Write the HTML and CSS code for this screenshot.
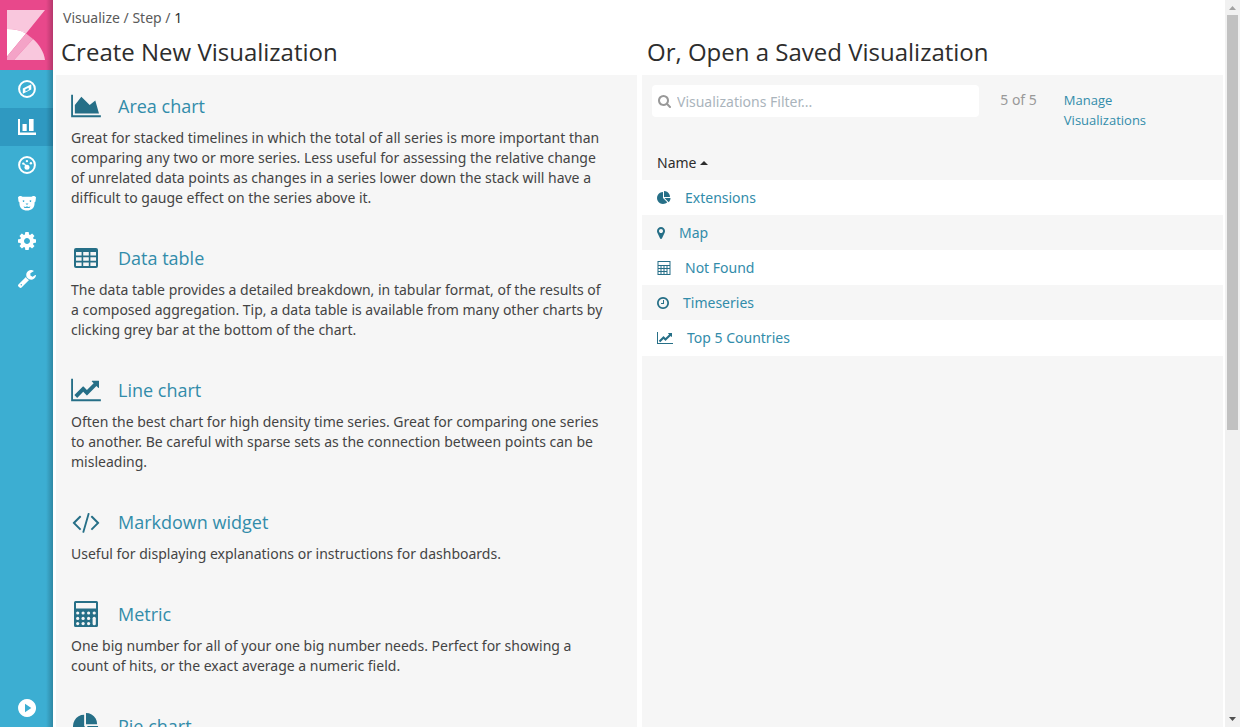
FILE: index.html
```html
<!DOCTYPE html>
<html lang="en">
<head>
<meta charset="utf-8">
<title>Visualize - Kibana</title>
<link rel="stylesheet" href="styles.css">
</head>
<body>
<svg class="sprite" aria-hidden="true">
  <symbol id="area" viewBox="0 0 2048 1792"><path d="M2048 1536v128h-2048v-1536h128v1408h1920zm-384-1024l256 896h-1664v-576l448-576 576 576z"/></symbol>
  <symbol id="line" viewBox="0 0 2048 1792"><path d="M2048 1536v128h-2048v-1536h128v1408h1920zm-128-1248v435q0 21-19.5 29.5t-35.5-7.5l-121-121-633 633q-10 10-23 10t-23-10l-233-233-416 416-192-192 585-585q10-10 23-10t23 10l233 233 464-464-121-121q-16-16-7.5-35.5t29.5-19.5h435q14 0 23 9t9 23z"/></symbol>
  <symbol id="table" viewBox="0 0 24 20"><path fill-rule="evenodd" d="M2 0h20a2 2 0 0 1 2 2v16a2 2 0 0 1-2 2H2a2 2 0 0 1-2-2V2a2 2 0 0 1 2-2zM2 4v3.600h5.600V4zM9.200 4v3.600h5.600V4zM16.400 4v3.600H22V4zM2 9.200v3.600h5.600V9.200zM9.200 9.200v3.600h5.600V9.200zM16.400 9.200v3.600H22V9.200zM2 14.400V18h5.600v-3.600zM9.200 14.400V18h5.600v-3.600zM16.400 14.400V18H22v-3.600z"/></symbol>
  <symbol id="code" viewBox="-64 0 1920 1792"><path d="M553 1399l-50 50q-10 10-23 10t-23-10l-466-466q-10-10-10-23t10-23l466-466q10-10 23-10t23 10l50 50q10 10 10 23t-10 23l-393 393 393 393q10 10 10 23t-10 23zm591-1067l-373 1291q-4 13-15.500 19.500t-23.500 2.500l-62-17q-13-4-19.500-15.500t-2.500-24.500l373-1291q4-13 15.500-19.500t23.500-2.500l62 17q13 4 19.500 15.500t2.500 24.500zm657 651l-466 466q-10 10-23 10t-23-10l-50-50q-10-10-10-23t10-23l393-393-393-393q-10-10-10-23t10-23l50-50q10-10 23-10t23 10l466 466q10 10 10 23t-10 23z"/></symbol>
  <symbol id="calc" viewBox="0 0 24 26"><path fill-rule="evenodd" d="M1.500 0h21A1.500 1.500 0 0 1 24 1.500v23a1.500 1.500 0 0 1-1.500 1.500h-21A1.500 1.500 0 0 1 0 24.500v-23A1.500 1.500 0 0 1 1.500 0zM2 2v5.500h20V2z"/><g class="keys"><circle cx="3.700" cy="12" r="1.600"/><circle cx="9.100" cy="12" r="1.600"/><circle cx="14.600" cy="12" r="1.600"/><circle cx="20.200" cy="12" r="1.600"/><circle cx="3.700" cy="17.400" r="1.600"/><circle cx="9.100" cy="17.400" r="1.600"/><circle cx="14.600" cy="17.400" r="1.600"/><rect x="18.600" y="15.800" width="3.200" height="8.400" rx="1.500"/><circle cx="3.700" cy="22.600" r="1.600"/><circle cx="9.100" cy="22.600" r="1.600"/><circle cx="14.600" cy="22.600" r="1.600"/></g></symbol>
  <symbol id="grid" viewBox="0 0 13 14"><path fill-rule="evenodd" d="M0 0h13v14H0zM1 1v3h11V1zM1 5v2h2V5zM4 5v2h2V5zM7 5v2h2V5zM10 5v2h2V5zM1 8v2h2V8zM4 8v2h2V8zM7 8v2h2V8zM10 8v5h2V8zM1 11v2h2v-2zM4 11v2h2v-2zM7 11v2h2v-2z"/></symbol>
  <symbol id="pie" viewBox="0 0 1792 1792"><path d="M768 890l546 546q-106 108-247.500 168t-298.500 60q-209 0-385.500-103t-279.500-279.500-103-385.500 103-385.500 279.500-279.500 385.500-103v762zm187 6h773q0 157-60 298.500t-168 247.500zm709-128h-768v-768q209 0 385.500 103t279.500 279.500 103 385.500z"/></symbol>
  <symbol id="marker" viewBox="384 0 1024 1792"><path d="M1152 640q0-106-75-181t-181-75-181 75-75 181 75 181 181 75 181-75 75-181zm256 0q0 109-33 179l-364 774q-16 33-47.500 52t-67.500 19-67.500-19-46.500-52l-365-774q-33-70-33-179 0-212 150-362t362-150 362 150 150 362z"/></symbol>
  <symbol id="clock" viewBox="128 0 1536 1792"><path d="M1024 544v448q0 14-9 23t-23 9h-320q-14 0-23-9t-9-23v-64q0-14 9-23t23-9h224v-352q0-14 9-23t23-9h64q14 0 23 9t9 23zm416 352q0-148-73-273t-198-198-273-73-273 73-198 198-73 273 73 273 198 198 273 73 273-73 198-198 73-273zm224 0q0 209-103 385.500t-279.500 279.500-385.500 103-385.500-103-279.500-279.500-103-385.500 103-385.500 279.500-279.500 385.500-103 385.500 103 279.500 279.500 103 385.500z"/></symbol>
  <symbol id="search" viewBox="64 128 1664 1664"><path d="M1216 832q0-185-131.500-316.500t-316.500-131.500-316.500 131.500-131.500 316.500 131.500 316.500 316.500 131.500 316.500-131.500 131.500-316.500zm512 832q0 52-38 90t-90 38q-54 0-90-38l-343-342q-179 124-399 124-143 0-273.500-55.500t-225-150-150-225-55.500-273.500 55.500-273.500 150-225 225-150 273.500-55.500 273.500 55.500 225 150 150 225 55.500 273.500q0 220-124 399l343 343q37 37 37 90z"/></symbol>
</svg>

<div class="app">
  <nav class="sidebar" aria-label="Kibana">
    <a class="logo" href="#" aria-label="Kibana home">
      <svg width="53" height="70" viewBox="0 0 53 70"><path fill="#f9c7dd" d="M7 10h38L26 33.500C20 30 14 29 7 29z"/><path fill="#fff" d="M7 29c7 0 13 1 19 4.500L7 56.500z"/><path fill="#f4a3c7" d="M7 56.500L26 33.500 33 39 14 60H7z"/><path fill="#f9c7dd" d="M33 39c6 5 11 13 12 21H14z"/></svg>
    </a>
    <a class="item" href="#" aria-label="Discover"><svg width="18" height="18" viewBox="0 0 18 18"><circle cx="9" cy="9" r="7.900" fill="none" stroke="#fff" stroke-width="2"/><path fill="#fff" fill-rule="evenodd" d="M13.300 4.300v5.200l-8.500 4.300V8.500zM10.700 7.700L7.400 9.200v2.400l3.300-1.700z"/></svg></a>
    <a class="item active" href="#" aria-label="Visualize"><svg width="18" height="16" viewBox="0 0 18 16"><path fill="#fff" d="M0 0h2v13.500h16V16H0zM4.500 5h4.200v7H4.500zM11 0h4.600v12H11z"/></svg></a>
    <a class="item" href="#" aria-label="Dashboard"><svg width="18" height="18" viewBox="0 0 18 18"><circle cx="9" cy="9" r="7.900" fill="none" stroke="#fff" stroke-width="2"/><g fill="#fff"><circle cx="8.900" cy="5.100" r="1.200"/><circle cx="5.300" cy="7.600" r="1.200"/><circle cx="12.900" cy="7.200" r="1.200"/><circle cx="9" cy="11.300" r="2.500"/><path d="M5 6.700l6.200 4-2.700 1.500z"/></g></svg></a>
    <a class="item" href="#" aria-label="Timelion"><svg width="18" height="15" viewBox="0 0 18 15"><path fill="#fff" fill-rule="evenodd" d="M0 1.300C1-.1 3.500-.2 4.500.7h9C14.500-.2 17-.1 18 1.300L17.500 5.500 16.500 6.500c.5 5-3 8-7.500 8s-8-3-7.500-8L.5 5.500zM5.500 4.200a.8.8 0 1 0 .1 0zM12.400 4.200a.8.8 0 1 0 .1 0zM7.500 7.500h3L9 9zM5.500 10.500l2.500.500 1-1 1 1 2.500-.5-1 1.500h-5z"/></svg></a>
    <a class="item" href="#" aria-label="Management"><svg width="18" height="18" viewBox="128 128 1536 1536"><path fill="#fff" d="M1152 896q0-106-75-181t-181-75-181 75-75 181 75 181 181 75 181-75 75-181zm512-109v222q0 12-8 23t-20 13l-185 28q-19 54-39 91 35 50 107 138 10 12 10 25t-9 23q-27 37-99 108t-94 71q-12 0-26-9l-138-108q-44 23-91 38-16 136-29 186-7 28-36 28h-222q-14 0-24.500-8.500t-11.500-21.500l-28-184q-49-16-90-37l-141 107q-10 9-25 9-14 0-25-11-126-114-165-168-7-10-7-23 0-12 8-23 15-21 51-66.500t54-70.500q-27-50-41-99l-183-27q-13-2-21-12.500t-8-23.500v-222q0-12 8-23t19-13l186-28q14-46 39-92-40-57-107-138-10-12-10-24 0-10 9-23 26-36 98.500-107.500t94.500-71.500q13 0 26 10l138 107q44-23 91-38 16-136 29-186 7-28 36-28h222q14 0 24.500 8.500t11.500 21.500l28 184q49 16 90 37l142-107q9-9 24-9 13 0 25 10 129 119 165 170 7 8 7 22 0 12-8 23-15 21-51 66.500t-54 70.500q26 50 41 98l183 28q13 2 21 12.500t8 23.500z"/></svg></a>
    <a class="item" href="#" aria-label="Dev Tools"><svg width="18" height="18" viewBox="84 130 1644 1644"><path fill="#fff" d="M448 1472q0-26-19-45t-45-19-45 19-19 45 19 45 45 19 45-19 19-45zm644-420l-682 682q-37 37-90 37-52 0-91-37l-106-108q-38-36-38-90 0-53 38-91l681-681q39 98 114.500 173.500t173.500 114.500zm634-435q0 39-23 106-47 134-164.500 217.500t-258.500 83.500q-185 0-316.500-131.500t-131.500-316.500 131.500-316.500 316.500-131.500q58 0 121.500 16.500t107.500 46.500q16 11 16 28t-16 28l-293 169v224l193 107q5-3 79-48.500t135.500-81 70.500-35.500q15 0 23.500 10t8.500 25z"/></svg></a>
    <button class="item expand" type="button" aria-label="Expand menu"><svg width="18" height="18" viewBox="0 0 18 18"><path fill="#fff" fill-rule="evenodd" d="M9 0a9 9 0 1 0 .1 0zM7 4.800v8.400L13.300 9z"/></svg></button>
  </nav>

  <main class="content">
    <div class="crumbs"><a href="#">Visualize</a> / <a href="#">Step</a> / <span class="current">1</span></div>
    <div class="columns">
      <section class="column">
        <h1>Create New Visualization</h1>
        <div class="panel">
          <article class="type">
            <h2><svg class="icon" width="30" height="26"><use href="#area"/></svg><a href="#">Area chart</a></h2>
            <p>Great for stacked timelines in which the total of all series is more important than comparing any two or more series. Less useful for assessing the relative change of unrelated data points as changes in a series lower down the stack will have a difficult to gauge effect on the series above it.</p>
          </article>
          <article class="type">
            <h2><svg class="icon" width="24" height="20"><use href="#table"/></svg><a href="#">Data table</a></h2>
            <p>The data table provides a detailed breakdown, in tabular format, of the results of a composed aggregation. Tip, a data table is available from many other charts by clicking grey bar at the bottom of the chart.</p>
          </article>
          <article class="type">
            <h2><svg class="icon" width="30" height="26"><use href="#line"/></svg><a href="#">Line chart</a></h2>
            <p>Often the best chart for high density time series. Great for comparing one series to another. Be careful with sparse sets as the connection between points can be misleading.</p>
          </article>
          <article class="type">
            <h2><svg class="icon" width="28" height="26"><use href="#code"/></svg><a href="#">Markdown widget</a></h2>
            <p>Useful for displaying explanations or instructions for dashboards.</p>
          </article>
          <article class="type">
            <h2><svg class="icon" width="24" height="26"><use href="#calc"/></svg><a href="#">Metric</a></h2>
            <p>One big number for all of your one big number needs. Perfect for showing a count of hits, or the exact average a numeric field.</p>
          </article>
          <article class="type">
            <h2><svg class="icon" width="26" height="26"><use href="#pie"/></svg><a href="#">Pie chart</a></h2>
          </article>
        </div>
      </section>

      <section class="column">
        <h1>Or, Open a Saved Visualization</h1>
        <div class="panel">
          <div class="tools">
            <label class="filter"><svg class="glass" width="13" height="13"><use href="#search"/></svg><input type="text" placeholder="Visualizations Filter..." aria-label="Visualizations Filter"></label>
            <div class="meta"><span class="count">5 of 5</span><a class="manage" href="#">Manage Visualizations</a></div>
          </div>
          <table class="saved">
            <thead><tr><th scope="col"><button type="button">Name <i class="caret"></i></button></th></tr></thead>
            <tbody>
              <tr><td><div class="entry"><svg class="icon" width="14" height="14"><use href="#pie"/></svg><a href="#">Extensions</a></div></td></tr>
              <tr><td><div class="entry"><svg class="icon" width="8" height="14"><use href="#marker"/></svg><a href="#">Map</a></div></td></tr>
              <tr><td><div class="entry"><svg class="icon" width="14" height="14"><use href="#grid"/></svg><a href="#">Not Found</a></div></td></tr>
              <tr><td><div class="entry"><svg class="icon" width="12" height="14"><use href="#clock"/></svg><a href="#">Timeseries</a></div></td></tr>
              <tr><td><div class="entry"><svg class="icon" width="16" height="14"><use href="#line"/></svg><a href="#">Top 5 Countries</a></div></td></tr>
            </tbody>
          </table>
        </div>
      </section>
    </div>
  </main>

  <div class="scroll" aria-hidden="true">
    <svg width="15" height="15" viewBox="0 0 15 15"><path fill="#a3a3a3" d="M4 10h7L7.500 6z"/></svg>
    <div class="track"><div class="thumb"></div></div>
    <svg width="15" height="15" viewBox="0 0 15 15"><path fill="#505050" d="M4 5h7L7.500 9z"/></svg>
  </div>
</div>
</body>
</html>
```

FILE: styles.css
```css
* { box-sizing: border-box; }

body {
  margin: 0;
  font-family: "Noto Sans", "Open Sans", sans-serif;
  font-size: 14px;
  line-height: 20px;
  color: #444;
  background: #fff;
}

a { color: #328caa; text-decoration: none; }
svg { display: block; flex: none; }
.sprite { display: none; }
.icon { fill: #266f87; }
.keys { fill: #f6f6f6; }

.app { display: flex; height: 100vh; overflow: hidden; }

/* Sidebar */
.sidebar {
  display: flex;
  flex-direction: column;
  flex: none;
  width: 53px;
  background: #3caed2;
  position: relative;
}
.sidebar::after {
  content: "";
  position: absolute;
  inset: 0 0 0 auto;
  width: 7px;
  background: linear-gradient(to right, rgba(0, 0, 0, 0), rgba(0, 0, 0, 0.22));
  pointer-events: none;
}
.logo { height: 70px; background: #e8488b; }
.item {
  display: flex;
  align-items: center;
  justify-content: center;
  height: 38px;
  padding: 0;
  border: 0;
  background: none;
}
.item.active { background: #2f99c1; }
.expand { margin-top: auto; }

/* Main */
.content { flex: 1; min-width: 0; padding: 8px 2px 0 3px; }
.crumbs { padding-left: 7px; color: #5a5a5a; }
.crumbs a { color: #5a5a5a; }
.crumbs .current { color: #2d2d2d; }

.columns { display: grid; grid-template-columns: 1fr 1fr; gap: 5px; }
.column { min-width: 0; }
h1, h2, .manage { font-family: "Open Sans", "Noto Sans", sans-serif; }
h1 {
  margin: 0;
  padding: 8px 5px;
  font-size: 24px;
  line-height: 31px;
  font-weight: 400;
  color: #2d2d2d;
}
.panel { min-height: 100vh; background: #f6f6f6; }

.type { padding: 15px 15px 19px; }
.type h2 {
  display: grid;
  grid-template-columns: 30px 1fr;
  gap: 17px;
  align-items: center;
  height: 32px;
  margin: 0 0 6px;
  font-size: 18px;
  font-weight: 400;
}
.type h2 .icon { justify-self: center; }
.type p { margin: 0; padding-right: 14px; }

/* Saved list */
.tools {
  display: grid;
  grid-template-columns: 7fr 5fr;
  align-items: start;
  padding: 10px 10px 15px;
}
.filter {
  display: flex;
  align-items: center;
  gap: 6px;
  height: 32px;
  padding: 1px 6px 0;
  border-radius: 4px;
  background: #fff;
}
.glass { fill: #999; }
.filter input {
  flex: 1;
  min-width: 0;
  padding: 0;
  border: 0;
  outline: 0;
  background: none;
  font: inherit;
  color: #2d2d2d;
}
.filter input::placeholder { color: #aab4bc; opacity: 1; }
.meta { display: flex; gap: 27px; padding: 5px 30px 0 21px; }
.count { white-space: nowrap; color: #999; }
.manage { font-size: 13px; }

.saved { width: 100%; border-spacing: 0; border-bottom: 1px solid #fff; }
.saved th { padding: 0 15px; height: 35px; text-align: left; font-weight: 400; }
.saved th button {
  display: flex;
  align-items: center;
  gap: 4px;
  padding: 0;
  border: 0;
  background: none;
  font: inherit;
  color: #2d2d2d;
}
.caret {
  border: 4px solid transparent;
  border-top: 0;
  border-bottom-color: #2d2d2d;
}
.saved td { padding: 0 15px; height: 35px; }
.saved tbody tr:nth-child(odd) { background: #fff; }
.entry { display: flex; align-items: center; gap: 14px; }

/* Scrollbar */
.scroll {
  display: flex;
  flex-direction: column;
  flex: none;
  width: 15px;
  background: #f1f1f1;
}
.track { flex: 1; padding: 0 2px; }
.thumb { height: 59.5%; background: #c1c1c1; }
```
